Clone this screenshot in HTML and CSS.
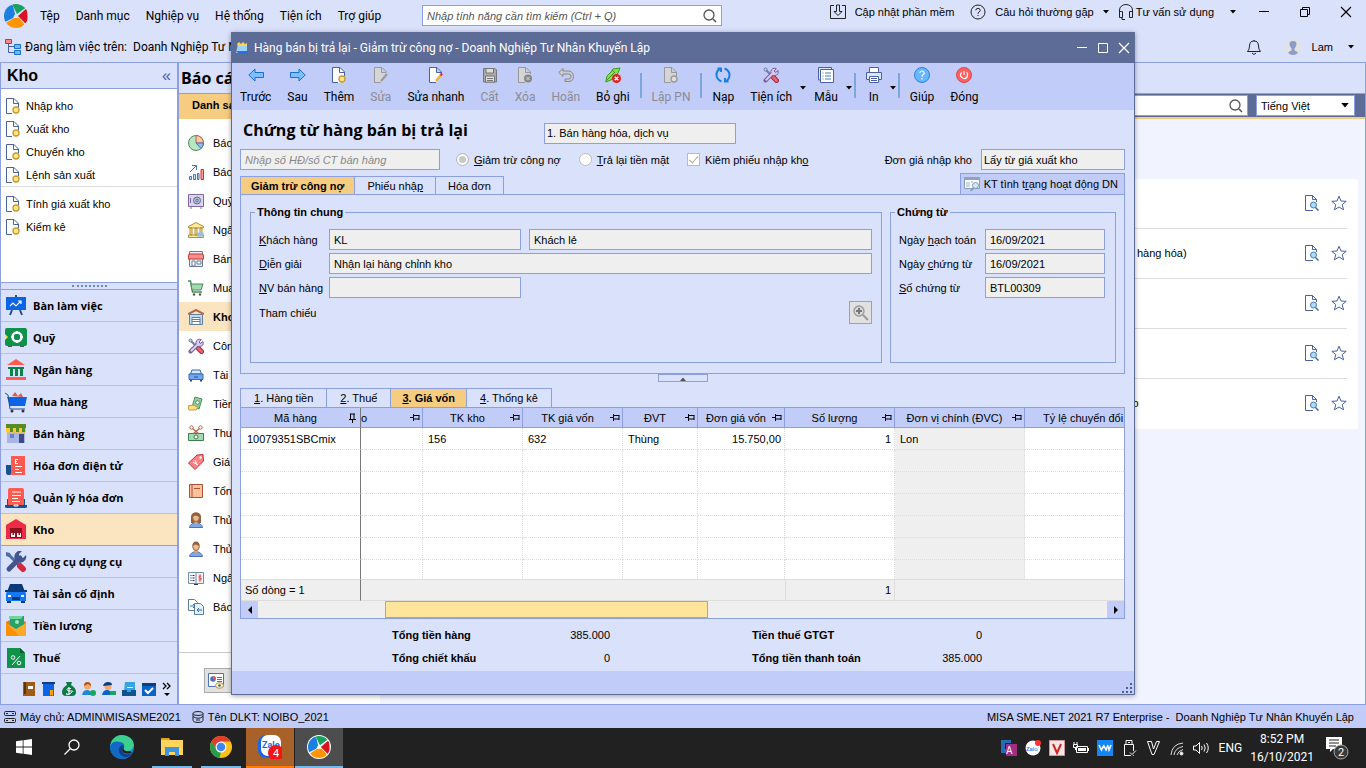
FILE: index.html
```html
<!DOCTYPE html>
<html lang="vi">
<head>
    <meta charset="UTF-8">
    <meta name="viewport" content="width=device-width, initial-scale=1.0">
    <title>MISA SME.NET 2021</title>
    <link rel="stylesheet" href="styles.css">
</head>
<body>

<!-- shared icons -->
<svg class="sprite" aria-hidden="true">
    <clipPath id="round"><circle cx="12" cy="12" r="12"/></clipPath>
    <symbol id="i-logo" viewBox="0 0 24 24">
        <g clip-path="url(#round)">
            <path d="M0 0H7L9 2 11 10 9 14 1 18H0Z" fill="#1a7fe0"/>
            <path d="M8 0H18L22 3.500 13 10 11 6Z" fill="#18a15f"/>
            <path d="M23 4 24 20 21.500 19.500 14 12Z" fill="#d8121f"/>
            <path d="M2 19 10 14H15L20.500 20.500 18 24H5Z" fill="#ff9400"/>
        </g>
    </symbol>
    <symbol id="i-docnew" viewBox="0 0 16 16">
        <path d="M1.500.500H9L13.500 5V15.500H1.500Z" fill="#fff"/>
        <path d="M7 15.500H1.500V.500H9L13.500 5V9M8.500.500V5.500H13.500" fill="none" stroke="#4a62a3"/>
        <circle cx="11" cy="12" r="3" fill="#ffe680" stroke="#c39a33" stroke-width="1.300"/>
    </symbol>
    <symbol id="i-docview" viewBox="0 0 16 16">
        <path d="M9 15.500H1.500V.500H8.500L12.500 4.500V7M8.500.500V4.500H12.500" fill="#fff" stroke="#4a62a3"/>
        <circle cx="9.500" cy="10" r="3" fill="#a9defa" stroke="#4a7ab5"/>
        <path d="M11.500 12.500 14.500 15.500" stroke="#4a62a3" stroke-width="1.500"/>
    </symbol>
    <symbol id="i-star" viewBox="0 0 16 16">
        <path d="M8 1.200 10 6 15.200 6.300 11.200 9.600 12.600 14.800 8 12 3.400 14.800 4.800 9.600.800 6.300 6 6Z" fill="#fff" stroke="#4a62a3"/>
    </symbol>
    <symbol id="i-search" viewBox="0 0 16 16">
        <circle cx="7" cy="7" r="5" fill="none" stroke="currentColor" stroke-width="1.300"/>
        <path d="m11 11 3 3" stroke="currentColor" stroke-width="1.600"/>
    </symbol>
    <symbol id="i-tools" viewBox="0 0 16 16">
        <path d="M2 2 14 14" stroke="#6d7c9c" stroke-width="2"/>
        <path d="m10.500 10.500 3 3" stroke="#a02c3e" stroke-width="5" stroke-linecap="round"/>
        <path d="m10.500 10.500 3 3" stroke="#f0606e" stroke-width="3" stroke-linecap="round"/>
        <path d="M2.500 13.500 10.500 5.500" stroke="#7d5d9e" stroke-width="4" stroke-linecap="round"/>
        <path d="M13.500 1.500 11 4l1.500 1.500L15 3.500A3.700 3.700 0 1 1 13 1.500" fill="#d6cbee" stroke="#7d5d9e"/>
        <path d="M2.800 13.200 10 6" stroke="#d6cbee" stroke-width="2"/>
        <circle cx="2.500" cy="2.500" r="1.500" fill="#c7d2ea" stroke="#6d7c9c"/>
    </symbol>
    <symbol id="i-pin" viewBox="0 0 10 8">
        <path d="M0 3.500H3M3.500 0V7M4 1.500H9.500M9 1.500V6M4 5H9" fill="none" stroke="#000"/>
    </symbol>
    <symbol id="i-drop" viewBox="0 0 6 4"><path d="M0 0H6L3 3.500Z"/></symbol>
    <symbol id="i-close" viewBox="0 0 12 12"><path d="m1 1 10 10M11 1 1 11" stroke="currentColor" stroke-width="1.200"/></symbol>
    <symbol id="i-person" viewBox="0 0 16 16">
        <path d="M1.500 15.500Q2 11.500 8 10.500 14 11.500 14.500 15.500Z" fill="#7dabe8" stroke="#4b72b5"/>
        <rect x="6.500" y="8" width="3" height="4" fill="#d9a273"/>
        <ellipse cx="8" cy="5.500" rx="3.300" ry="4" fill="#e8bd8e" stroke="#9c6a45"/>
        <path d="M4.500 5Q4.500.500 8 .500 11.500.500 11.500 5 9.500 4 8 3.500 5.500 3.500 4.500 5Z" fill="#94603c"/>
    </symbol>
</svg>

<div class="app">
    <header class="menubar">
        <svg class="logo"><use href="#i-logo"/></svg>
        <nav class="menu">
            <a href="#">Tệp</a>
            <a href="#">Danh mục</a>
            <a href="#">Nghiệp vụ</a>
            <a href="#">Hệ thống</a>
            <a href="#">Tiện ích</a>
            <a href="#">Trợ giúp</a>
        </nav>
        <label class="main-search">
            <input type="text" placeholder="Nhập tính năng cần tìm kiếm (Ctrl + Q)" aria-label="Tìm kiếm">
            <svg class="icon"><use href="#i-search"/></svg>
        </label>
        <div class="links">
            <a href="#">
                <svg class="icon" viewBox="0 0 16 16" fill="none" stroke="#222"><path d="M4 1.500H.500V14.500H15.500V1.500H12M6.500 1V7.500H4L8 11.500 12 7.500H9.500V1Z"/></svg>
                <span>Cập nhật phần mềm</span>
            </a>
            <a href="#">
                <svg class="icon" viewBox="0 0 16 16" fill="none" stroke="#222"><circle cx="8" cy="8" r="7"/><path d="M5.800 6.300Q6 4.300 8 4.300T10.200 6.300Q10.200 7.300 9 8 8 8.500 8 9.800M8 11V12"/></svg>
                <span>Câu hỏi thường gặp</span>
                <svg class="drop"><use href="#i-drop"/></svg>
            </a>
            <a href="#" class="support">
                <svg class="icon" viewBox="0 0 16 16" fill="none" stroke="#222"><path d="M1.500 8V6A6.500 5.500 0 0 1 14.500 6V8M3.500 7.500H1.500V13.500H4.500V7.500ZM11.500 7.500H14.500V13.500H11.500ZM4 14V15.500H7"/></svg>
                <span>Tư vấn sử dụng</span>
                <svg class="drop"><use href="#i-drop"/></svg>
            </a>
        </div>
        <div class="app-buttons">
            <button type="button" aria-label="Thu nhỏ"><svg viewBox="0 0 12 12"><path d="M1 5.500H11" stroke="#000"/></svg></button>
            <button type="button" aria-label="Khôi phục"><svg viewBox="0 0 12 12"><path d="M1.500 3.500H8.500V10.500H1.500ZM3.500 3V1.500H10.500V8.500H9" fill="none" stroke="#000"/></svg></button>
            <button type="button" aria-label="Đóng"><svg><use href="#i-close"/></svg></button>
        </div>
    </header>

    <div class="workbar">
        <svg class="icon" viewBox="0 0 16 16"><path d="M3.500 5V13.500H9M3.500 7.500H9" fill="none" stroke="#4a62a3"/><path d="M.500.500H6.500V4.500H.500Z" fill="#f88" stroke="#c0392b"/><path d="M9.500 5.500H15.500V9.500H9.500ZM9.500 11.500H15.500V15.500H9.500Z" fill="#6db9ff" stroke="#1c6fc9"/></svg>
        <span>Đang làm việc trên:</span>
        <span class="company">Doanh Nghiệp Tư N</span>
        <div class="user">
            <svg class="icon" viewBox="0 0 16 16" fill="none" stroke="#222"><path d="M8 1V2M1.500 12.500Q3.500 10.500 3.500 7 3.500 2 8 2T12.500 7Q12.500 10.500 14.500 12.500ZM6 14 8 15.500 10 14"/></svg>
            <svg class="icon" viewBox="0 0 16 16"><circle cx="8" cy="8" r="8" fill="#e2e2e2"/><path d="M3 14Q4 12 6.500 11.500V9.500Q4.500 7.500 4.500 5 4.500 2 8 2T11.500 5Q11.500 7.500 9.500 9.500V11.500Q12 12 13 14 8 18 3 14Z" fill="#8d9bc9"/></svg>
            <span>Lam</span>
            <svg class="drop"><use href="#i-drop"/></svg>
        </div>
    </div>

    <main class="workspace">
        <aside class="sidebar">
            <h2 class="side-title">Kho <span>«</span></h2>
            <ul class="tasks">
                <li><a href="#"><svg class="icon"><use href="#i-docnew"/></svg>Nhập kho</a></li>
                <li><a href="#"><svg class="icon"><use href="#i-docnew"/></svg>Xuất kho</a></li>
                <li><a href="#"><svg class="icon"><use href="#i-docnew"/></svg>Chuyển kho</a></li>
                <li><a href="#"><svg class="icon"><use href="#i-docnew"/></svg>Lệnh sản xuất</a></li>
                <li class="split"><a href="#"><svg class="icon"><use href="#i-docnew"/></svg>Tính giá xuất kho</a></li>
                <li><a href="#"><svg class="icon"><use href="#i-docnew"/></svg>Kiểm kê</a></li>
            </ul>
            <div class="grip"><i></i></div>
            <nav class="modules">
                <a href="#"><svg viewBox="0 0 22 22"><path d="M7 15 5 20M15 15 17 20" stroke="#1d4f91" stroke-width="2"/><path d="M1 2H21V15H1Z" fill="#0b63e5"/><path d="M10 0H12V2H10Z" fill="#1d4f91"/><path d="m5 11 3-3 3 3 5-5M13 6H16V9" fill="none" stroke="#fff" stroke-width="1.200"/></svg>Bàn làm việc</a>
                <a href="#"><svg viewBox="0 0 22 22"><path d="M3 18H7V20H3ZM15 18H19V20H15Z" fill="#555"/><rect width="22" height="18" y="1" rx="2" fill="#0d9249"/><circle cx="12" cy="10" r="4.500" fill="none" stroke="#fff" stroke-width="2.500"/><path d="M12 4V7M12 13V16M6 10H9M15 10H18" stroke="#fff" stroke-width="2"/><path d="m0 7 3 3-3 3Z" fill="#ffe13b"/></svg>Quỹ</a>
                <a href="#"><svg viewBox="0 0 22 22"><path d="M11 0 20 6H2ZM1 18H21V21H1Z" fill="#ff5a4f"/><path d="M3 8H19V10H3ZM5 10H8V17H5ZM10 10H13V17H10ZM15 10H18V17H15Z" fill="#0a8348"/></svg>Ngân hàng</a>
                <a href="#"><svg viewBox="0 0 22 22"><path d="m7 5 3-4 3 4 3-3 2 4Z" fill="#e0584a"/><path d="M2 6H22L20 15H5Z" fill="#0b63e5"/><path d="M0 2 3 4 5 18H20" fill="none" stroke="#1d4f91"/><circle cx="7" cy="20" r="1.500" fill="#333"/><circle cx="18" cy="20" r="1.500" fill="#333"/></svg>Mua hàng</a>
                <a href="#"><svg viewBox="0 0 22 22"><path d="M2 7H20V20H2Z" fill="#a9b5e3"/><path d="M1 1H21V5H1Z" fill="#578b24"/><path d="M1 5H21V8Q21 10 19 10T17 8Q17 10 15 10T13 8Q13 10 11 10T9 8Q9 10 7 10T5 8Q5 10 3 10T1 8Z" fill="#ffc928"/><path d="M5 5H8V9H5ZM11 5H14V9H11ZM17 5H20V9H17Z" fill="#578b24"/><path d="M14 11H19V20H14Z" fill="#3b4a8a"/><path d="M5 11H9V15H5Z" fill="#6b7fcf"/></svg>Bán hàng</a>
                <a href="#"><svg viewBox="0 0 22 22"><path d="M1 10H6V20H3Q1 20 1 17Z" fill="#14538f"/><path d="M6 1H20V20H5Q6 20 6 17Z" fill="#ff5a4f"/><path d="M10 4.500H13M10 6.500H12M10 8.500H13M10.500 4V9M10 11.500H17M10 14.500H14M10 17.500H17" fill="none" stroke="#fff"/></svg>Hóa đơn điện tử</a>
                <a href="#"><svg viewBox="0 0 22 22"><path d="M2 12H20V18H2Z" fill="#14538f"/><rect x="3" y="1" width="16" height="18" rx="2" fill="#ff5a4f"/><path d="M0 18H22V20Q22 21 20 21H2Q0 21 0 20Z" fill="#14538f"/><path d="M9 18H13V19H9ZM7 5H16M7 8.500H16M7 11.500H13M7 14.500H15" stroke="#fff"/></svg>Quản lý hóa đơn</a>
                <a href="#" class="current"><svg viewBox="0 0 22 22"><path d="M11 0 21 6V20H1V6Z" fill="#ee2b47"/><path d="M5 9H17V19H5Z" fill="#8d1020"/><path d="M6 14H10V18H6ZM12 14H16V18H12Z" fill="#fff"/><path d="M7.500 14H9V16H7.500ZM13.500 14H15V16H13.500Z" fill="#8d1020"/></svg>Kho</a>
                <a href="#"><svg viewBox="0 0 22 22"><path d="m3 3 11 11" stroke="#4a6ea8" stroke-width="3"/><path d="m15 15 3 3" stroke="#d3283e" stroke-width="6" stroke-linecap="round"/><path d="M4 18 15 7" stroke="#42558f" stroke-width="5" stroke-linecap="round"/><path d="M17 0 14 3V7H18L21 4A6 6 0 1 1 17 0" fill="#42558f"/><path d="m1 1 4 1 1 3-2 1-3-1Z" fill="#4a6ea8"/></svg>Công cụ dụng cụ</a>
                <a href="#"><svg viewBox="0 0 22 22"><path d="M5 1H17L20 9H2Z" fill="#0a3a78"/><path d="M2 9H20Q21 9 21 11V18H1V11Q1 9 2 9Z" fill="#1577f2"/><path d="M0 7H3V9H0ZM19 7H22V9H19ZM2 18H6V20H2ZM16 18H20V20H16ZM7 14H15V17H7Z" fill="#0a3a78"/><path d="M3 12H6V14H3ZM16 12H19V14H16Z" fill="#fff"/></svg>Tài sản cố định</a>
                <a href="#"><svg viewBox="0 0 22 22"><path d="m1 7 10-5 10 5V19H1Z" fill="#e07c16"/><path d="M5 1H19V14H5Z" fill="#25a36a"/><path d="M4 1H18L16 4H4Z" fill="#6cd69d"/><circle cx="12" cy="7" r="2" fill="#a5e6c2"/><path d="m1 8 10 6 10-6V21H1Z" fill="#ffa726"/><path d="m1 8 13 13H1Z" fill="#ff8f00"/></svg>Tiền lương</a>
                <a href="#"><svg viewBox="0 0 22 22"><path d="M2 1H15L20 6V21H2Z" fill="#10924b"/><path d="M15 1V6H20Z" fill="#075f2e"/><circle cx="8" cy="10.500" r="1.800" fill="none" stroke="#fff"/><circle cx="14" cy="16" r="1.800" fill="none" stroke="#fff"/><path d="m7 18 8-9" stroke="#fff"/></svg>Thuế</a>
            </nav>
            <div class="mini">
                <svg viewBox="0 0 14 14"><path d="M1 0H13V14H1Z" fill="#a35a12"/><path d="M2 0H4V12H2Z" fill="#5e3106"/><path d="M6 4H11V7H6Z" fill="#fff"/></svg>
                <svg viewBox="0 0 14 14"><path d="M1 2H12V14H1Z" fill="#0b63e5"/><path d="M0 0H13V2H0Z" fill="#123c7c"/><path d="M8 8H11V14L9.500 12.500 8 14Z" fill="#ffa000"/></svg>
                <svg viewBox="0 0 14 14"><path d="M4 0H10L9 3Q14 6 14 10T10 14H4Q0 14 0 10T5 3Z" fill="#0c7a45"/><path d="M9 6.500Q5 5.500 5 7.500T9 9 8 11.500 5 11M7 5V13" fill="none" stroke="#fff"/></svg>
                <svg viewBox="0 0 14 14"><path d="M0 13Q1 8 5 8T10 13Z" fill="#1f87d3"/><circle cx="5.500" cy="4" r="3.500" fill="#f6a96c"/><path d="M2 4Q2 0 5.500 0T9 4L6 2Z" fill="#b35318"/><circle cx="11" cy="11" r="3" fill="#16a65f"/></svg>
                <svg viewBox="0 0 14 14"><path d="M0 13Q1 8 5 8T10 13Z" fill="#0b63c5"/><circle cx="6" cy="4.500" r="3.500" fill="#f6a96c"/><path d="M1 4Q2 0 6 0T10 3Z" fill="#0d3f7d"/><path d="M8 9H14V13H8Z" fill="#16a65f"/></svg>
                <svg viewBox="0 0 14 14"><path d="M3 0H13V9H2Z" fill="#35a4e0"/><path d="M5 5H11V6H5Z" fill="#fff"/><path d="M0 8H14V14H0Z" fill="#14538f"/><path d="M5 8H9V10H5Z" fill="#35a4e0"/></svg>
                <svg viewBox="0 0 14 14"><path d="M0 1H14V14H0Z" fill="#0b63c5"/><path d="M0 1H14V4H0Z" fill="#123c7c"/><path d="m3 8 3 3 5-5" fill="none" stroke="#fff" stroke-width="2"/></svg>
                <svg viewBox="0 0 14 14"><path d="m1 1 3 3-3 3M5 1 8 4 5 7" fill="none" stroke="#000" stroke-width="1.300"/><path d="M2 11H8L5 14Z"/></svg>
            </div>
        </aside>

        <section class="reports">
            <h1>Báo cáo</h1>
            <div class="report-bar">
                <a href="#" class="tab-list">Danh sách</a>
                <label class="find"><input type="text" aria-label="Tìm báo cáo"><svg class="icon"><use href="#i-search"/></svg></label>
                <label class="lang"><select aria-label="Ngôn ngữ"><option>Tiếng Việt</option></select><svg class="drop"><use href="#i-drop"/></svg></label>
            </div>
            <div class="report-body">
                <div class="groups">
                    <ul>
                        <li><svg class="icon" viewBox="0 0 16 16"><circle cx="8" cy="8" r="7.500" fill="#b8e6c0" stroke="#4e8a5c"/><path d="M8 .500A7.500 7.500 0 0 1 15.500 8H8Z" fill="#ffc9a3" stroke="#b5674a"/><path d="M8 8H15.500A7.500 7.500 0 0 1 13 13.500Z" fill="#8fbdf5" stroke="#4b72b5"/></svg>Báo</li>
                        <li><svg class="icon" viewBox="0 0 16 16"><path d="M1.500 12.500H3.500V15.500H1.500ZM5.500 10.500H7.500V15.500H5.500ZM9.500 9.500H11V15.500H9.500Z" fill="#cfe0ff" stroke="#4b72b5"/><path d="M13 5.500H15.500V15.500H13Z" fill="#ff9d9d" stroke="#c0392b"/><path d="m2 8 6-6M4 1.500H8.500V6" fill="none" stroke="#4b72b5"/></svg>Báo</li>
                        <li><svg class="icon" viewBox="0 0 16 16"><path d="M.500 1.500H15.500V13.500H.500Z" fill="#ddd3f0" stroke="#7d6ba0"/><circle cx="9" cy="7.500" r="3.500" fill="#b7c4d8" stroke="#5f6f8f"/><circle cx="9" cy="7.500" r="1.300" fill="none" stroke="#5f6f8f"/><path d="M2.500 5V10M2 15H4M12 15H14" stroke="#7d6ba0"/></svg>Quỹ</li>
                        <li><svg class="icon" viewBox="0 0 16 16"><path d="M8 .500 15.500 4.500V6H.500V4.500ZM2 6H4V13H2ZM7 6H9V13H7ZM12 6H14V13H12ZM.500 13H15.500V15.500H.500Z" fill="#ffeaa0" stroke="#b08d35"/><path d="M9 10.500H15.500V14.500H9Z" fill="#8fbdf5"/></svg>Ngân</li>
                        <li><svg class="icon" viewBox="0 0 16 16"><path d="M1.500.500H14.500V15.500H1.500Z" fill="#e8eef5" stroke="#6d7c9c"/><path d="M1 3H15L16 8H0Z" fill="#ff8d8d" stroke="#c0392b"/><path d="M4 10H7V15H4ZM9 10H13V13H9Z" fill="#fff" stroke="#6d7c9c"/></svg>Bán</li>
                        <li><svg class="icon" viewBox="0 0 16 16"><path d="M0 1H2.500L4.500 12H14" fill="none" stroke="#4e8a5c" stroke-width="1.500"/><path d="M3 4H15L13 10H4Z" fill="#a3dbb0" stroke="#4e8a5c"/><circle cx="6" cy="14.500" r="1.200" fill="#555"/><circle cx="12" cy="14.500" r="1.200" fill="#555"/></svg>Mua</li>
                        <li class="current"><svg class="icon" viewBox="0 0 16 16"><path d="M1.500 5.500H14.500V15.500H1.500Z" fill="#b9dcf7" stroke="#5f7f9f"/><path d="M0 5 8 1 16 5" fill="none" stroke="#b5674a" stroke-width="2"/><path d="M4 8.500H12V15.500H4ZM4 10.500H12M4 12.500H12" fill="#fff" stroke="#5f7f9f"/></svg>Kho</li>
                        <li><svg class="icon"><use href="#i-tools"/></svg>Công</li>
                        <li><svg class="icon" viewBox="0 0 16 16"><path d="M4 3H12L13.500 7H2.500Z" fill="#d6e8ff" stroke="#3b6bb0"/><path d="M1 7H15V12.500H1Z" fill="#6fa8ec" stroke="#3b6bb0"/><path d="M2 13H4V14.500H2ZM12 13H14V14.500H12ZM6 9.500H10V10.500H6Z" fill="#2d4f86"/></svg>Tài</li>
                        <li><svg class="icon" viewBox="0 0 16 16"><path d="m7 1 7 2-3 10-7-2Z" fill="#8fd19f" stroke="#4e8a5c"/><circle cx="9.500" cy="6.500" r="1.800" fill="#fff" stroke="#4e8a5c"/><path d="M0 10 5 9 10 11 8 14H1Z" fill="#ffdf85" stroke="#c39a33"/></svg>Tiền</li>
                        <li><svg class="icon" viewBox="0 0 16 16"><path d="M.500 8.500H15.500V15.500H.500Z" fill="#a3dbb0" stroke="#3c8050"/><circle cx="8" cy="12" r="2" fill="#fff" stroke="#3c8050"/><path d="M4 3 11 9M12 3 5 9" stroke="#b5674a" stroke-width="1.300"/><circle cx="3.500" cy="2.500" r="1.700" fill="#fff" stroke="#b5674a"/><circle cx="12.500" cy="2.500" r="1.700" fill="#fff" stroke="#b5674a"/></svg>Thuế</li>
                        <li><svg class="icon" viewBox="0 0 16 16"><path d="M9 1 15 .500 15.500 7 7 15.500.500 9Z" fill="#ff8080" stroke="#b83240"/><circle cx="12.500" cy="3.500" r="1.200" fill="#fff"/><path d="m5 8 5 3M7 6l2 5" stroke="#fff"/></svg>Giá</li>
                        <li><svg class="icon" viewBox="0 0 16 16"><path d="M1.500 1.500H14.500V14.500H1.500Z" fill="#ffc09a" stroke="#a5563a"/><path d="M4 1.500V14M6 5.500H12" stroke="#a5563a"/></svg>Tổng</li>
                        <li><svg class="icon" viewBox="0 0 16 16"><path d="M3 11V5Q3 .500 8 .500T13 5V11Z" fill="#94603c"/><use href="#i-person"/></svg>Thủ</li>
                        <li><svg class="icon"><use href="#i-person"/></svg>Thủ</li>
                        <li><svg class="icon" viewBox="0 0 16 16"><path d="M.500 2.500H15.500V13.500H.500ZM8 3V14" fill="#f4f7fb" stroke="#6f8fa5"/><path d="M2.500 5.500H3.500M4.500 5.500H6.500M2.500 8H3.500M4.500 8H6.500M2.500 10.500H3.500M4.500 10.500H6.500M6 14.500H10" stroke="#335"/><path d="M10 4H14V12H10Z" fill="#ffd5d5"/><path d="M13 6Q11 5.500 11 7T13 8.500 11 10M12 4.500V11.500" fill="none" stroke="#e05555"/></svg>Ngân</li>
                        <li><svg class="icon" viewBox="0 0 16 16"><path d="M.500.500H6.500L9.500 3.500V11.500H.500Z" fill="#fff" stroke="#5c7c9d"/><path d="M6.500 4.500H12.500L15.500 7.500V15.500H6.500Z" fill="#e4f1fb" stroke="#5c7c9d"/><path d="M2 7H7M5 5 7 7 5 9M14 11H9M11 9 9 11 11 13" fill="none" stroke="#2a6dbb"/></svg>Báo</li>
                    </ul>
                    <div class="group-foot">
                        <button type="button" aria-label="Xem báo cáo"><svg class="icon" viewBox="0 0 16 16"><path d="M.500.500H15.500V13.500H.500Z" fill="#fff" stroke="#4b72b5"/><circle cx="5" cy="6" r="2.800" fill="#4b72b5"/><path d="M5 6V3A3 3 0 0 1 8 6Z" fill="#e55"/><path d="M9 4.500H14M9 6.500H14M9 8.500H14" stroke="#4b72b5"/><ellipse cx="11.500" cy="12.500" rx="4" ry="2.800" fill="#fff3c4" stroke="#b89340"/><circle cx="11.500" cy="12.500" r="1.300" fill="#355f9e"/></svg></button>
                    </div>
                </div>
                <ul class="cards">
                    <li><svg class="icon"><use href="#i-docview"/></svg><svg class="icon"><use href="#i-star"/></svg></li>
                    <li><span class="wide">hàng hóa)</span><svg class="icon"><use href="#i-docview"/></svg><svg class="icon"><use href="#i-star"/></svg></li>
                    <li><svg class="icon"><use href="#i-docview"/></svg><svg class="icon"><use href="#i-star"/></svg></li>
                    <li><svg class="icon"><use href="#i-docview"/></svg><svg class="icon"><use href="#i-star"/></svg></li>
                    <li><span>kho</span><svg class="icon"><use href="#i-docview"/></svg><svg class="icon"><use href="#i-star"/></svg></li>
                </ul>
            </div>
        </section>
    </main>

    <footer class="statusbar">
        <svg viewBox="0 0 12 12" fill="none" stroke="#222"><rect x=".5" y=".5" width="11" height="4" rx="1"/><rect x=".5" y="7.500" width="11" height="4" rx="1"/><path d="M2 2.500H4M8 2.500H10M2 9.500H4M8 9.500H10"/></svg>
        <span>Máy chủ: ADMIN\MISASME2021</span>
        <svg viewBox="0 0 12 12" fill="none" stroke="#222"><ellipse cx="6" cy="2.500" rx="5" ry="2"/><path d="M1 2.500V9.500Q1 11.500 6 11.500T11 9.500V2.500M1 5.500Q6 9 11 5.500M4 9H8"/></svg>
        <span>Tên DLKT: NOIBO_2021</span>
        <span class="edition">MISA SME.NET 2021 R7 Enterprise -&nbsp; Doanh Nghiệp Tư Nhân Khuyến Lập</span>
    </footer>
</div>

<section class="window" role="dialog" aria-label="Hàng bán bị trả lại">
    <div class="titlebar">
        <svg viewBox="0 0 12 12"><path d="M2 2H11V9L9 11H0Z" fill="#9cd4f7"/><path d="M1 2 3 0 5 2 7 0 9 2 11 1V4H2Z" fill="#ffd34d"/><path d="M0 9 3 12H10L12 9Z" fill="#2c6fe0"/></svg>
        <span>Hàng bán bị trả lại - Giảm trừ công nợ - Doanh Nghiệp Tư Nhân Khuyến Lập</span>
        <div class="win-buttons">
            <button type="button" aria-label="Thu nhỏ"><svg viewBox="0 0 12 12"><path d="M1 5.500H11" stroke="#fff"/></svg></button>
            <button type="button" aria-label="Phóng to"><svg viewBox="0 0 12 12"><path d="M1.500 1.500H10.500V10.500H1.500Z" fill="none" stroke="#fff"/></svg></button>
            <button type="button" aria-label="Đóng"><svg><use href="#i-close"/></svg></button>
        </div>
    </div>

    <div class="toolbar">
        <button type="button"><svg class="icon" viewBox="0 0 16 16"><path d="M.800 8 7 2V5.500H15.500V10.500H7V14Z" fill="#7cc0ff" stroke="#1c6fd0"/></svg>Trước</button>
        <button type="button"><svg class="icon" viewBox="0 0 16 16"><path d="M15.200 8 9 2V5.500H.500V10.500H9V14Z" fill="#7cc0ff" stroke="#1c6fd0"/></svg>Sau</button>
        <button type="button"><svg class="icon"><use href="#i-docnew"/></svg>Thêm</button>
        <button type="button" disabled><svg class="icon" viewBox="0 0 16 16"><path d="M8 15.500H1.500V.500H9L13.500 5M8.500.500V5.500H13.500" fill="#d5d5d5" stroke="#999"/><path d="m8 14 6-7" stroke="#999" stroke-width="2"/></svg>Sửa</button>
        <button type="button"><svg class="icon" viewBox="0 0 16 16"><path d="M8 15.500H1.500V.500H9L13.500 5V7M8.500.500V5.500H13.500" fill="#fff" stroke="#4a62a3"/><path d="m8 14 5-6" stroke="#e8b53a" stroke-width="2.500"/><path d="m12.500 8.500 1.500-2" stroke="#c7405a" stroke-width="2.500"/></svg>Sửa nhanh</button>
        <button type="button" disabled><svg class="icon" viewBox="0 0 16 16"><path d="M1.500 1.500H13L14.500 3V15H1.500Z" fill="#aaa" stroke="#777"/><path d="M4 1.500H11.500V6H4ZM3.500 9H12.500V15H3.500ZM5 11.500H11M5 13.500H11" fill="#ddd" stroke="#777"/></svg>Cất</button>
        <button type="button" disabled><svg class="icon" viewBox="0 0 16 16"><path d="M8 15.500H1.500V.500H9L13.500 5V7M8.500.500V5.500H13.500" fill="#d5d5d5" stroke="#999"/><circle cx="11" cy="11.500" r="4" fill="#888"/><path d="m9.500 10 3 3M12.500 10 9.500 13" stroke="#ddd"/></svg>Xóa</button>
        <button type="button" disabled><svg class="icon" viewBox="0 0 16 16"><path d="M5 1.500.800 5.500 5 9.500V7H11Q13 7 13 9.500T11 12H7V14.500H11Q15.500 14 15.500 9.500T11 4H5Z" fill="#ccc" stroke="#888"/></svg>Hoãn</button>
        <button type="button"><svg class="icon" viewBox="0 0 16 16"><path d="M15 1 8 2 6 5 2 9 .800 15 6 13 13 6Z" fill="#8ddc56" stroke="#3b9a20"/><path d="m1 14 9-9M7 3 10 6" stroke="#3b9a20"/><circle cx="11.500" cy="11.500" r="4.500" fill="#e02020"/><path d="m9.700 9.700 3.600 3.600M13.300 9.700 9.700 13.300" stroke="#fff" stroke-width="1.500"/></svg>Bỏ ghi</button>
        <i class="sep"></i>
        <button type="button" disabled><svg class="icon" viewBox="0 0 16 16"><path d="M8 15.500H1.500V.500H9L13.500 5V9M8.500.500V5.500H13.500" fill="#d5d5d5" stroke="#999"/><circle cx="11" cy="12" r="3" fill="#ddd" stroke="#999" stroke-width="1.300"/></svg>Lập PN</button>
        <i class="sep"></i>
        <button type="button"><svg class="icon" viewBox="0 0 16 16"><path d="M6.500 14.500Q1.500 12.500 1.500 8T5.500 1.500M2.500 1.500H6V5M9.500 1.500Q14.500 3.500 14.500 8T10.500 14.500M13.500 14.500H10V11" fill="none" stroke="#1c7fe0" stroke-width="2"/></svg>Nạp</button>
        <button type="button"><svg class="icon"><use href="#i-tools"/></svg>Tiện ích</button>
        <svg class="drop"><use href="#i-drop"/></svg>
        <button type="button"><svg class="icon" viewBox="0 0 16 16"><path d="M.500.500H13.500V13H.500Z" fill="#dbe5fb" stroke="#4a62a3"/><path d="M2.500 2.500H15.500V15.500H2.500Z" fill="#fff" stroke="#4a62a3"/><path d="M4.500 6H5.500M7 6H13M4.500 9H5.500M7 9H13M4.500 12H5.500M7 12H13" stroke="#4a7ab5"/></svg>Mẫu</button>
        <svg class="drop"><use href="#i-drop"/></svg>
        <i class="sep"></i>
        <button type="button"><svg class="icon" viewBox="0 0 16 16"><path d="M3.500.500H12.500V6H3.500Z" fill="#fff" stroke="#4a62a3"/><path d="M.500 5.500H15.500V12.500H.500Z" fill="#dbe5fb" stroke="#4a62a3"/><path d="M3.500 9.500H12.500V15.500H3.500ZM5 11.500H11M5 13.500H11" fill="#fff" stroke="#4a62a3"/></svg>In</button>
        <svg class="drop"><use href="#i-drop"/></svg>
        <i class="sep"></i>
        <button type="button"><svg class="icon" viewBox="0 0 16 16"><circle cx="8" cy="8" r="7.500" fill="#67b7ff" stroke="#2c82dc"/><path d="M5.800 6Q6 4 8 4T10.200 6Q10.200 7 9 7.800 8 8.500 8 9.800M8 11V12.500" fill="none" stroke="#fff" stroke-width="1.200"/></svg>Giúp</button>
        <button type="button"><svg class="icon" viewBox="0 0 16 16"><circle cx="8" cy="8" r="7.500" fill="#ff5f5f" stroke="#d94848"/><path d="M8 4V8M5.500 5.500Q4 7 4.700 9T8 11.500 11.300 9 10.500 5.500" fill="none" stroke="#fff" stroke-width="1.200"/></svg>Đóng</button>
    </div>

    <form class="voucher">
        <div class="line top-line">
            <h2>Chứng từ hàng bán bị trả lại</h2>
            <input type="text" value="1. Bán hàng hóa, dịch vụ" aria-label="Loại chứng từ" readonly>
        </div>
        <div class="line options">
            <input type="text" class="ref-no" placeholder="Nhập số HĐ/số CT bán hàng" aria-label="Số hóa đơn" readonly>
            <label class="check"><input type="radio" name="kind" checked><span><u>G</u>iảm trừ công nợ</span></label>
            <label class="check"><input type="radio" name="kind"><span><u>T</u>rả lại tiền mặt</span></label>
            <label class="check"><input type="checkbox" checked disabled><span>Kiêm phiếu nhập kh<u>o</u></span></label>
            <label class="price">Đơn giá nhập kho <input type="text" value="Lấy từ giá xuất kho" readonly></label>
        </div>
        <div class="tabs">
            <button type="button" class="tab current">Giảm trừ công nợ</button>
            <button type="button" class="tab">Phiếu nhậ<u>p</u></button>
            <button type="button" class="tab">Hóa đơn</button>
            <button type="button" class="status-check"><svg class="icon" viewBox="0 0 16 16"><path d="M.500 1.500H15.500V12.500H.500Z" fill="#fff" stroke="#8a9cb8"/><path d="M.500 1H15.500V4H.500Z" fill="#8fa3bd"/><path d="M3 6V11M5 6V11M7 6H9" stroke="#8fb3d8"/><circle cx="11.500" cy="9.500" r="3" fill="#cfe8fa" stroke="#7d94b0"/><path d="m9.500 12-3 3" stroke="#7d94b0" stroke-width="1.500"/></svg><span>KT tình t<u>r</u>ạng hoạt động DN</span></button>
        </div>

        <div class="panel">
            <fieldset class="general">
                <legend>Thông tin chung</legend>
                <div class="grid-form">
                    <label for="customer"><u>K</u>hách hàng</label>
                    <input id="customer" type="text" value="KL" readonly>
                    <input class="cust-name" type="text" value="Khách lẻ" aria-label="Tên khách hàng" readonly>
                    <label for="memo"><u>D</u>iễn giải</label>
                    <input id="memo" class="full" type="text" value="Nhận lại hàng chỉnh kho" readonly>
                    <label for="seller"><u>N</u>V bán hàng</label>
                    <input id="seller" type="text" readonly>
                    <span class="ref-label">Tham chiếu</span>
                    <button type="button" class="lookup" aria-label="Chọn tham chiếu"><svg viewBox="0 0 16 16"><circle cx="6" cy="6" r="5" fill="#d9d9d9" stroke="#999" stroke-width="1.300"/><path d="M6 3V9M3 6H9" stroke="#777" stroke-width="2"/><path d="m10 10 5 5" stroke="#999" stroke-width="2"/></svg></button>
                </div>
            </fieldset>
            <fieldset class="document">
                <legend>Chứng từ</legend>
                <div class="grid-form">
                    <label for="posted">Ngày <u>h</u>ạch toán</label>
                    <input id="posted" type="text" value="16/09/2021" readonly>
                    <label for="dated">Ngày <u>c</u>hứng từ</label>
                    <input id="dated" type="text" value="16/09/2021" readonly>
                    <label for="number"><u>S</u>ố chứng từ</label>
                    <input id="number" type="text" value="BTL00309" readonly>
                </div>
            </fieldset>
        </div>
        <button type="button" class="collapse" aria-label="Thu gọn"><svg viewBox="0 0 6 4"><path d="M0 4H6L3 .500Z" fill="#555"/></svg></button>

        <div class="tabs detail-tabs">
            <button type="button" class="tab"><u>1</u>. Hàng tiền</button>
            <button type="button" class="tab"><u>2</u>. Thuế</button>
            <button type="button" class="tab current"><u>3</u>. Giá vốn</button>
            <button type="button" class="tab"><u>4</u>. Thống kê</button>
        </div>
        <div class="detail">
            <table>
                <colgroup>
                    <col class="c-code"><col class="c-cut"><col class="c-acc"><col class="c-acc"><col class="c-unit"><col class="c-price"><col class="c-qty"><col class="c-main"><col>
                </colgroup>
                <thead>
                    <tr>
                        <th class="frozen"><div>Mã hàng<svg class="up"><use href="#i-pin"/></svg></div></th>
                        <th class="cut"><div>o<svg><use href="#i-pin"/></svg></div></th>
                        <th><div>TK kho<svg><use href="#i-pin"/></svg></div></th>
                        <th><div>TK giá vốn<svg><use href="#i-pin"/></svg></div></th>
                        <th><div>ĐVT<svg><use href="#i-pin"/></svg></div></th>
                        <th><div>Đơn giá vốn<svg><use href="#i-pin"/></svg></div></th>
                        <th><div>Số lượng<svg><use href="#i-pin"/></svg></div></th>
                        <th><div>Đơn vị chính (ĐVC)<svg><use href="#i-pin"/></svg></div></th>
                        <th class="last">Tỷ lệ chuyển đổi</th>
                    </tr>
                </thead>
                <tbody>
                    <tr><td>10079351SBCmix</td><td></td><td>156</td><td>632</td><td>Thùng</td><td class="num">15.750,00</td><td class="num">1</td><td>Lon</td><td></td></tr>
                    <tr><td></td><td></td><td></td><td></td><td></td><td></td><td></td><td></td><td></td></tr>
                    <tr><td></td><td></td><td></td><td></td><td></td><td></td><td></td><td></td><td></td></tr>
                    <tr><td></td><td></td><td></td><td></td><td></td><td></td><td></td><td></td><td></td></tr>
                    <tr><td></td><td></td><td></td><td></td><td></td><td></td><td></td><td></td><td></td></tr>
                    <tr><td></td><td></td><td></td><td></td><td></td><td></td><td></td><td></td><td></td></tr>
                    <tr class="short"><td></td><td></td><td></td><td></td><td></td><td></td><td></td><td></td><td></td></tr>
                </tbody>
                <tfoot>
                    <tr><td class="frozen">Số dòng = 1</td><td colspan="5"></td><td class="num sum">1</td><td colspan="2"></td></tr>
                </tfoot>
            </table>
            <div class="scroll">
                <button type="button" aria-label="Cuộn trái"><svg viewBox="0 0 4 8"><path d="M4 0V8L0 4Z"/></svg></button>
                <div class="track"><i></i></div>
                <button type="button" aria-label="Cuộn phải"><svg viewBox="0 0 4 8"><path d="M0 0V8L4 4Z"/></svg></button>
            </div>
        </div>
        <dl class="totals">
            <dt>Tổng tiền hàng</dt><dd>385.000</dd>
            <dt>Tiền thuế GTGT</dt><dd>0</dd>
            <dt>Tổng chiết khấu</dt><dd>0</dd>
            <dt>Tổng tiền thanh toán</dt><dd>385.000</dd>
        </dl>
    </form>
    <div class="win-foot"><svg viewBox="0 0 12 12"><path d="M8 0H10V2H8ZM4 4H6V6H4ZM8 4H10V6H8ZM0 8H2V10H0ZM4 8H6V10H4ZM8 8H10V10H8Z" fill="#4d5f96"/></svg></div>
</section>

<footer class="taskbar">
    <button type="button" aria-label="Start"><svg viewBox="0 0 16 16" fill="#fff"><path d="M0 2.300 6.700 1.300V7.500H0ZM7.500 1.200 16 0V7.500H7.500ZM0 8.500H6.700V14.700L0 13.700ZM7.500 8.500H16V16L7.500 14.800Z"/></svg></button>
    <button type="button" aria-label="Search"><svg viewBox="0 0 16 16" fill="none" stroke="#fff" stroke-width="1.300"><circle cx="10" cy="6" r="5"/><path d="m6.500 9.500-6 6"/></svg></button>
    <button type="button" class="big edge" aria-label="Edge"><svg viewBox="0 0 24 24"><circle cx="12" cy="12" r="12" fill="#1386d8"/><path d="M1 8Q4 0 12 0 23 1 24 10 23 16 17 16 13 16 14 13 16 8 9 7 3 7 0 12Z" fill="#3ccf8e"/><path d="M0 12Q2 5 10 7 15 8 14 12 12 13 12 15 13 20 20 19 22 19 22.500 18 19 24 12 24 1 23 0 12Z" fill="#1169c4"/><path d="M12 10Q8 12 9 17 11 22 17 22 20 21 22 18 20 19.500 17 19.500 12 19 12 15 13 13 14 13 14 11 12 10Z" fill="#0e3f8c"/><path d="M14 12Q13 14 14 15 16 17 20 16L22 18Q13 20 12 15Z" fill="#212121"/></svg></button>
    <button type="button" class="big running" aria-label="Explorer"><svg viewBox="0 0 24 24"><path d="M1 3H9L11 6H1Z" fill="#e5a220"/><path d="M1 5H23V20H1Z" fill="#ffd45e"/><path d="M5 12H19V21H15V17H9V21H5Z" fill="#3b97dd"/></svg></button>
    <button type="button" class="big running" aria-label="Chrome"><svg viewBox="0 0 24 24"><circle cx="12" cy="12" r="11" fill="#fbc116"/><path d="M2.500 6.500A11 11 0 0 1 21.500 6.500H12L7 14Z" fill="#e33b2e"/><path d="M2.500 6.500 8 15 12 17 10.500 23A11 11 0 0 1 2.500 6.500Z" fill="#2a9d4d"/><circle cx="12" cy="12" r="5.500" fill="#fff"/><circle cx="12" cy="12" r="4.300" fill="#4284f3"/></svg></button>
    <button type="button" class="big zalo" aria-label="Zalo"><svg viewBox="0 0 24 24"><rect width="22" height="23" rx="8" fill="#1668e8"/><rect x="3" y="0" width="20" height="21" rx="7" fill="#fff"/><text x="4" y="13" font-size="9" font-weight="bold" fill="#1668e8">Zalo</text><circle cx="18" cy="18" r="8" fill="#f31515"/><text x="15" y="22" font-size="11" fill="#fff">4</text></svg></button>
    <button type="button" class="big active" aria-label="MISA"><svg viewBox="0 0 24 24"><circle cx="12" cy="12" r="12" fill="#fff"/><use href="#i-logo" x="1" y="1" width="22" height="22"/></svg></button>
    <div class="tray">
        <svg viewBox="0 0 16 16"><path d="M0 0H10V3H4V9H10V13H0Z" fill="#1f6fb5"/><path d="M5 4H16V16H5Z" fill="#a0307f"/><text x="5" y="14" font-size="10" fill="#fff">A</text></svg>
        <svg viewBox="0 0 16 16"><circle cx="8" cy="8" r="7.500" fill="#fff"/><text x="1" y="11" font-size="6" fill="#1668e8">Zalo</text><circle cx="13" cy="3" r="3" fill="#f33"/></svg>
        <svg viewBox="0 0 16 16"><path d="M.500.500H15.500V15.500H.500Z" fill="#f6e6e6" stroke="#c99"/><path d="m4 4 4 9 4-9" fill="none" stroke="#d32222" stroke-width="2"/></svg>
        <svg viewBox="0 0 16 16" fill="none" stroke="#fff"><path d="M3.500 6.500H14.500V12.500H3.500ZM15.500 8V11M1 2V4M4 2V4M.500 4.500H4.500V7.500H.500ZM2.500 7V10"/><path d="M5 8H13V11H5Z" fill="#fff" stroke="none"/></svg>
        <svg viewBox="0 0 16 16"><path d="M0 0H16V16H0Z" fill="#1486f5"/><path d="m2 5 2.500 5L7 5M6.500 5 9 10 11 5M10.500 5 12 10 14 5" fill="none" stroke="#fff" stroke-width="1.500"/></svg>
        <svg viewBox="0 0 16 16" fill="none" stroke="#fff"><path d="M5 4V.500H11V4M3.500 4.500H12.500V15.500H3.500ZM7 2.500H9"/><path d="M9 12.500 11 14.500 15 10.500" stroke="#212121" stroke-width="3"/><path d="M9 12.500 11 14.500 15 10.500"/></svg>
        <svg viewBox="0 0 16 16" fill="none" stroke="#fff"><path d="M2.500 1.500H6.500L8.500 9 11.500 1.500H14.500L9 14.500H7Z"/></svg>
        <svg viewBox="0 0 16 16" fill="none" stroke="#ddd"><path d="M2 15Q3 4 14 3M5 15Q6 8 14 6.500M8 15Q9 11 14 9.500"/><circle cx="12.500" cy="13.500" r="1.500" fill="#fff"/></svg>
        <svg viewBox="0 0 16 16" fill="none" stroke="#fff"><path d="M.500 6V10H3L6.500 13.500V2.500L3 6ZM8.500 6Q10 8 8.500 10M11 4.500Q13.500 8 11 11.500M13.500 3Q17 8 13.500 13"/></svg>
        <span>ENG</span>
        <time>8:52 PM<br>16/10/2021</time>
        <svg class="notice" viewBox="0 0 24 24"><path d="M0 1H16V13H7L4 16V13H0Z" fill="#fff"/><path d="M3 4H13M3 7H13M3 10H10" stroke="#212121"/><circle cx="15" cy="16" r="7" fill="#3a3a3a" stroke="#aaa"/><text x="12" y="20" font-size="11" fill="#fff">2</text></svg>
    </div>
</footer>

</body>
</html>
```
FILE: styles.css
```css
:root {
    --bg: #dae1fb;
    --bar: #c1cdf8;
    --line: #8c9fe0;
    --dark: #5d6b97;
    --orange: #f5cc80;
    --field: #efefef;
    --ui: Roboto, "Noto Sans", sans-serif;
    --head: "Open Sans", "Noto Sans", sans-serif;
}

* {
    box-sizing: border-box;
}

body {
    margin: 0;
    height: 100vh;
    display: flex;
    flex-direction: column;
    overflow: hidden;
    background: var(--bg);
    font: 11px/16px "Liberation Sans", Arial, sans-serif;
    color: #000;
}

a { color: inherit; text-decoration: none; }
ul { list-style: none; margin: 0; padding: 0; }
h1, h2 { margin: 0; }
button, input, select { font: inherit; color: inherit; }
button { margin: 0; padding: 0; border: none; background: none; }
svg { flex: none; display: block; }

input[type="text"] {
    min-width: 0;
    height: 21px;
    padding: 0 4px;
    border: 1px solid var(--line);
    border-radius: 0;
    background: var(--field);
    outline: none;
}

.sprite { position: absolute; width: 0; height: 0; }
.icon { width: 16px; height: 16px; }
.drop { width: 6px; height: 4px; }

/* main application */
.app {
    flex: 1;
    min-height: 0;
    display: flex;
    flex-direction: column;
}

.menubar {
    height: 31px;
    padding: 0 14px 0 4px;
    display: flex;
    align-items: center;
}

.logo { width: 24px; height: 24px; }

.menu {
    display: flex;
    gap: 16px;
    width: 382px;
    margin-left: 12px;
    font: 12px/16px var(--ui);
    white-space: nowrap;
}

.main-search, .find {
    display: flex;
    align-items: center;
    background: #fff;
    border: 1px solid var(--line);
    color: #555;
}

.main-search { width: 300px; height: 21px; padding-right: 3px; }
.main-search input[type="text"], .find input[type="text"] { flex: 1; border: none; height: 18px; background: none; }
.main-search input::placeholder { color: #555; font-style: italic; opacity: 1; }

.links {
    margin-left: auto;
    padding-bottom: 7px;
    display: flex;
    gap: 16px;
}

.links a {
    display: flex;
    align-items: center;
    gap: 9px;
    white-space: nowrap;
}

.links .support { gap: 2px; margin-left: -7px; }
.links .support .drop { margin-left: 14px; }

.app-buttons {
    display: flex;
    gap: 29px;
    margin-left: 22px;
    padding-bottom: 7px;
}

.app-buttons svg, .win-buttons svg { width: 12px; height: 12px; }

.workbar {
    height: 32px;
    padding: 0 12px 0 5px;
    display: flex;
    align-items: center;
    font: 12px/16px var(--ui);
    border-bottom: 1px solid var(--line);
    gap: 4px;
    white-space: nowrap;
}

.company { margin-left: 2px; }

.user {
    margin-left: auto;
    display: flex;
    align-items: center;
    gap: 15px;
    font: 11px/16px "Liberation Sans", Arial, sans-serif;
}

.user .icon:nth-child(2) { margin-left: 8px; }
.user .icon + span { margin-left: -4px; }

.workspace {
    flex: 1;
    min-height: 0;
    display: flex;
}

.sidebar {
    flex: none;
    width: 178px;
    display: flex;
    flex-direction: column;
    border: solid var(--line);
    border-width: 0 1px 1px 1px;
}

.side-title {
    height: 26px;
    padding: 0 6px;
    display: flex;
    justify-content: space-between;
    align-items: center;
    font: bold 16px/24px "Liberation Sans", Arial, sans-serif;
    border-bottom: 1px solid var(--line);
}

.side-title span { font-weight: normal; color: #3c62b5; }

.tasks {
    flex: 1;
    padding: 5px 0;
    background: #fff;
}

.tasks a {
    display: flex;
    align-items: center;
    gap: 5px;
    height: 23px;
    padding-left: 4px;
}

.tasks .split { padding-top: 5px; border-top: 1px solid #ddd; }

.grip {
    height: 8px;
    border: solid var(--line);
    border-width: 1px 0;
}

.grip i {
    display: block;
    width: 35px;
    margin: 2px auto 0;
    border-top: 2px dotted #6c86c4;
}

.modules a {
    display: flex;
    align-items: center;
    gap: 6px;
    height: 32px;
    padding-left: 4px;
    border-bottom: 1px solid #b3c1ee;
    font: bold 11px/16px var(--head);
}

.modules svg { width: 22px; height: 22px; }
.modules .current { background: #fae5c0; border-color: var(--line); }

.mini {
    height: 30px;
    padding-left: 21px;
    display: flex;
    align-items: center;
    gap: 6px;
}

.mini svg { width: 14px; height: 14px; }

.reports {
    flex: 1;
    min-width: 0;
    display: flex;
    flex-direction: column;
    border: 1px solid var(--line);
    border-top: none;
}

.reports h1 {
    height: 31px;
    padding-left: 2px;
    font: bold 16px/30px var(--head);
    border-bottom: 1px solid var(--line);
}

.report-bar {
    display: flex;
    align-items: center;
    gap: 8px;
    height: 25px;
    padding-right: 10px;
    background: var(--dark);
    border-bottom: 2px solid var(--orange);
}

.tab-list {
    width: 190px;
    padding-left: 13px;
    background: var(--orange);
    font-weight: bold;
    line-height: 23px;
}

.find { flex: 1; height: 21px; padding-right: 3px; }

.lang {
    display: flex;
    align-items: center;
    width: 99px;
    height: 21px;
    padding-right: 5px;
    border: 1px solid var(--line);
    background: #fff;
}

.lang select {
    appearance: none;
    flex: 1;
    padding: 0 4px;
    border: none;
    background: none;
}

.lang .drop { width: 8px; height: 5px; }

.report-body {
    flex: 1;
    min-height: 0;
    display: flex;
    background: #f1f3ff;
}

.groups {
    width: 201px;
    display: flex;
    flex-direction: column;
    background: #fff;
}

.groups ul { padding-top: 9px; flex: 1; }

.groups li {
    display: flex;
    align-items: center;
    gap: 9px;
    height: 29px;
    padding-left: 9px;
}

.groups .current { background: #fae5c0; font-weight: bold; }

.group-foot {
    height: 52px;
    padding: 15px 0 0 25px;
    border-top: 1px solid #ccc;
}

.group-foot button {
    display: flex;
    align-items: center;
    width: 90px;
    height: 25px;
    padding: 0 3px;
    border: 1px solid #aaa;
    background: #e1e1e1;
}

.cards {
    flex: 1;
    align-self: flex-start;
    margin: 60px 7px 0 10px;
    padding: 0 11px;
    background: #fff;
}

.cards li {
    display: flex;
    justify-content: flex-end;
    align-items: center;
    gap: 11px;
    height: 50px;
    padding-bottom: 2px;
    border-bottom: 1px solid #ddd;
}

.cards li:last-child { border-bottom: none; }
.cards span { width: 172px; }
.cards .wide { width: 156px; }

.statusbar {
    height: 23px;
    padding: 0 12px 0 4px;
    display: flex;
    align-items: center;
    gap: 4px;
    background: var(--bar);
}

.statusbar svg { width: 12px; height: 12px; }
.statusbar span + svg { margin-left: 7px; }
.edition { margin-left: auto; }

/* voucher window over the application */
.window {
    position: absolute;
    inset: 32px 231px 73px 231px;
    display: flex;
    flex-direction: column;
    border: 1px solid var(--dark);
    background: var(--bg);
    box-shadow: 0 1px 5px rgba(0, 0, 0, .35);
}

.titlebar {
    height: 30px;
    padding: 0 4px;
    display: flex;
    align-items: center;
    gap: 6px;
    background: var(--dark);
    color: #fff;
    font: 12px/16px var(--ui);
}

.titlebar > svg { width: 12px; height: 12px; }

.win-buttons {
    margin-left: auto;
    display: flex;
    gap: 9px;
}

.toolbar {
    height: 47px;
    padding: 4px 8px 0;
    display: flex;
    gap: 16px;
    background: var(--bar);
    font: 12px/16px var(--ui);
}

.toolbar button {
    display: flex;
    flex-direction: column;
    align-items: center;
    gap: 6px;
    height: 38px;
    white-space: nowrap;
}

.toolbar button:disabled { color: #8b8b93; }

.toolbar .sep {
    width: 2px;
    height: 25px;
    margin: 6px -6px 0;
    background: #7aa7dc;
}

.toolbar .drop { margin: 19px -8px 0; }

.voucher {
    flex: 1;
    display: flex;
    flex-direction: column;
    padding: 0 9px 0 8px;
}

.line {
    display: flex;
    align-items: center;
}

.top-line { padding: 10px 0 6px; height: 39px; }
.top-line h2 { width: 304px; padding: 0 0 4px 3px; font: bold 16px/22px var(--head); white-space: nowrap; }
.top-line input { width: 192px; margin-top: 3px; }

.ref-no { width: 200px; margin-right: 16px; }
.ref-no::placeholder { color: #888; font-style: italic; opacity: 1; }

.check {
    display: flex;
    align-items: center;
    gap: 5px;
    margin-right: 18px;
    white-space: nowrap;
}

.check input {
    appearance: none;
    width: 13px;
    height: 13px;
    margin: 0;
    border: 1px solid #bbb;
    background: #fff;
}

.check input[type="radio"] { border-radius: 50%; }
.check input[type="radio"]:checked { background: #c8c8c8; box-shadow: inset 0 0 0 2px #fff; }

.check input[type="checkbox"]::after {
    content: "";
    display: block;
    width: 4px;
    height: 8px;
    margin: 0 auto;
    border: solid #aaa;
    border-width: 0 1px 1px 0;
    transform: rotate(40deg);
}

.price {
    margin-left: auto;
    display: flex;
    align-items: center;
    gap: 9px;
    white-space: nowrap;
}

.price input { width: 144px; }
.price input[type="text"], .top-line input[type="text"] { padding-left: 2px; }

.tabs {
    display: flex;
    align-items: flex-end;
    margin-top: 3px;
    height: 21px;
}

.tab {
    height: 18px;
    padding: 0 12px;
    border: 1px solid var(--line);
    border-bottom: none;
    white-space: nowrap;
}

.tab + .tab { border-left: none; }
.tab.current { padding: 0 10px; background: var(--orange); font-weight: bold; }

.status-check {
    margin-left: auto;
    display: flex;
    align-items: center;
    gap: 4px;
    height: 21px;
    padding: 0 6px 0 3px;
    border: 1px solid var(--line);
    border-bottom: none;
    background: var(--bar);
    white-space: nowrap;
}

.panel {
    display: flex;
    gap: 8px;
    height: 180px;
    padding: 9px 8px 10px 9px;
    border: 1px solid var(--line);
}

fieldset {
    min-width: 0;
    margin: 0;
    padding: 9px 9px 0 8px;
    border: 1px solid var(--line);
}

legend { padding: 0 2px; margin-left: -4px; font-weight: bold; }

.general { flex: 1; }
.document { width: 226px; padding-right: 10px; }

.grid-form {
    display: grid;
    align-items: center;
    gap: 3px 8px;
}

.general .grid-form { grid-template-columns: 62px 192px 1fr; }
.document .grid-form { grid-template-columns: 78px 1fr; }
.general .full { grid-column: 2 / 4; }
.ref-label { grid-column: 1; }
.grid-form label, .grid-form span { white-space: nowrap; }

.lookup {
    grid-column: 3;
    justify-self: end;
    width: 23px;
    height: 23px;
    padding: 3px;
    border: 1px solid var(--line);
    background: #e1e1e1;
}

.collapse {
    align-self: center;
    width: 50px;
    height: 8px;
    padding: 2px 21px;
    border: 1px solid var(--line);
}

.collapse svg { width: 6px; height: 4px; }
.lookup svg { width: 16px; height: 16px; }

.detail-tabs { margin-top: 6px; height: 19px; }
.detail-tabs .tab { height: 19px; padding: 0 13px; }
.detail-tabs .tab.current { padding: 0 11px; }

.detail { border: 1px solid var(--line); }

.detail table {
    width: 100%;
    table-layout: fixed;
    border-collapse: separate;
    border-spacing: 0;
}

.c-code { width: 120px; }
.c-cut { width: 62px; }
.c-acc { width: 100px; }
.c-unit { width: 75px; }
.c-price { width: 87px; }
.c-qty { width: 110px; }
.c-main { width: 130px; }

.detail th {
    height: 20px;
    padding: 0 2px;
    border: solid var(--line);
    border-width: 0 1px 1px 0;
    background: var(--bar);
    font-weight: normal;
    overflow: hidden;
    white-space: nowrap;
}

.detail th div { display: flex; align-items: center; justify-content: center; }
.detail th svg { width: 10px; height: 8px; margin-left: auto; }
.detail th div::before { content: ""; margin-right: auto; }
.detail .cut { padding-left: 0; }
.detail .cut div::before { display: none; }
.detail th .up { transform: rotate(-90deg); }
.detail .last { border-right: none; padding-left: 18px; text-align: left; }

.detail tbody td {
    height: 22px;
    padding: 0 5px;
    border: dotted #ddd;
    border-width: 0 1px 1px 0;
    background: #fff;
}

.detail tbody .short td { height: 19px; border-bottom: none; }
.detail tbody td:nth-child(8) { background: var(--field); }
.detail tbody td:first-child, .detail .frozen { border-right: 1px solid #777; }
.detail tbody td:first-child { padding-left: 6px; }
.detail tbody td:last-child { border-right: none; }
.detail .num { text-align: right; padding-right: 3px; }

.detail tfoot td {
    height: 22px;
    padding: 0 4px;
    background: var(--field);
    border-top: 1px solid #ddd;
    border-bottom: 1px solid #ddd;
}

.detail .sum { border: 1px solid #ddd; }

.scroll { display: flex; height: 17px; background: var(--field); }

.scroll button {
    width: 17px;
    display: flex;
    align-items: center;
    justify-content: center;
    background: var(--bar);
}

.scroll button svg { width: 4px; height: 8px; }
.track { flex: 1; }

.track i {
    display: block;
    width: 38%;
    height: 17px;
    margin-left: 15%;
    background: #ffe49c;
    border: 1px solid #ff9238;
}

.totals {
    display: grid;
    grid-template-columns: 118px 100px 272px 100px;
    gap: 7px 0;
    margin: 8px 0 0 152px;
}

.totals dt { font-weight: bold; white-space: nowrap; }
.totals dd { margin: 0; text-align: right; }
.totals dt:nth-of-type(even) { padding-left: 142px; }

.win-foot {
    height: 23px;
    padding: 12px 0 0;
    background: var(--bar);
}

.win-foot svg { width: 12px; height: 12px; margin-left: auto; }

/* windows taskbar */
.taskbar {
    height: 40px;
    display: flex;
    align-items: stretch;
    background: #212121;
    color: #fff;
    font: 12px/18px var(--ui);
}

.taskbar > button {
    width: 48px;
    display: flex;
    align-items: center;
    justify-content: center;
    border-bottom: 2px solid transparent;
}

.taskbar > button svg { width: 16px; height: 16px; }
.taskbar > button.big svg { width: 24px; height: 24px; }
.taskbar > .edge { margin: 0 2px; }
.taskbar > .running { width: 40px; margin: 0 5px 0 4px; border-color: #76b9ed; }
.taskbar > .zalo { background: #a9612a; border-color: #ff7a00; }
.taskbar > .active { margin-left: 1px; background: #4d4d4d; border-color: #76b9ed; }

.tray {
    margin-left: auto;
    padding-right: 16px;
    display: flex;
    align-items: center;
    gap: 8px;
}

.tray svg { width: 16px; height: 16px; }
.tray span { margin-left: 2px; }
.tray time { text-align: center; }
.tray .notice { width: 24px; height: 24px; margin-left: 4px; }
```
